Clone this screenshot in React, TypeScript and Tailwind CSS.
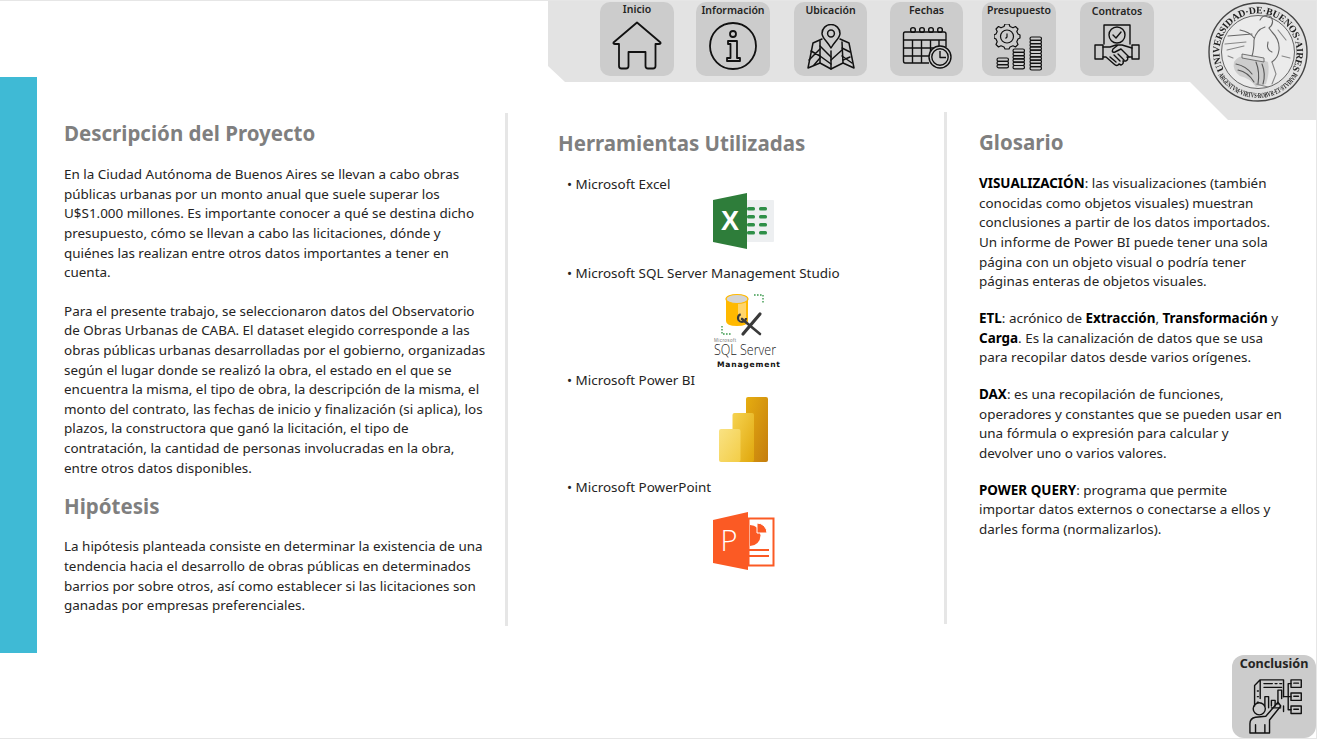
import React from 'react'

const body = "font-['Noto_Sans',sans-serif]"

function HomeIcon() {
  return (
    <svg viewBox="0 0 50 50" className="w-[50px] h-[50px]" fill="none" stroke="#111" strokeWidth="1.8" strokeLinejoin="round" strokeLinecap="round">
      <path d="M25 1.5 L1.5 21.5 Q1 23 3 23 L7 23 L7 45 Q7 47.5 9.5 47.5 L14 47.5 Q16.5 47.5 16.5 45 L16.5 31 L33.5 31 L33.5 45 Q33.5 47.5 36 47.5 L41 47.5 Q43.5 47.5 43.5 45 L43.5 23 L47 23 Q49 23 48.5 21.5 Z" />
    </svg>
  )
}

function InfoIcon() {
  return (
    <svg viewBox="0 0 50 50" className="w-[50px] h-[50px]" fill="none" stroke="#111" strokeWidth="1.8" strokeLinejoin="round">
      <circle cx="25" cy="25" r="23" />
      <circle cx="25" cy="13" r="3" />
      <path d="M20 20 L29 20 L29 37 L32 37 L32 40 L19 40 L19 37 L22.5 37 L22.5 23 L20 23 Z" />
    </svg>
  )
}

function MapIcon() {
  return (
    <svg viewBox="0 0 50 50" className="w-[50px] h-[50px]" fill="none" stroke="#111" strokeWidth="1.5" strokeLinejoin="round" strokeLinecap="round">
      <path d="M25 24 C21 17 16 14 16 9.5 A9 9 0 0 1 34 9.5 C34 14 29 17 25 24 Z" />
      <circle cx="25" cy="9.5" r="3.4" />
      <path d="M16 15 L7 19 L2 44 L14 39 L25 45 L37 39 L48 44 L43 19 L34 15" />
      <path d="M14 17 L14 39 M25 27 L25 45 M36 18 L37 39" />
      <path d="M5 27 L14 32 L25 40 M3 36 L14 25 M14 22 L25 33 M25 36 L36 26 M36 32 L46 39 M36 24 L44 28 M8 41 L14 34 M37 36 L44 33" />
    </svg>
  )
}

function CalendarIcon() {
  return (
    <svg viewBox="0 0 50 50" className="w-[50px] h-[50px]" fill="none" stroke="#111" strokeWidth="1.4" strokeLinejoin="round">
      <path d="M3 8 L42 8 Q44 8 44 10 L44 23 M27 39 L3 39 Q1.5 39 1.5 37 L1.5 10 Q1.5 8 3 8" />
      <path d="M1.5 16 L44 16 M1.5 24 L32 24 M1.5 32 L28 32 M10.5 16 L10.5 39 M19.5 16 L19.5 39 M28.5 16 L28.5 30 M37 16 L37 23" />
      <circle cx="11" cy="6" r="2.4" /><circle cx="20" cy="6" r="2.4" /><circle cx="29" cy="6" r="2.4" /><circle cx="38" cy="6" r="2.4" />
      <circle cx="38" cy="33" r="11" fill="#cccccc" />
      <circle cx="38" cy="33" r="8.2" />
      <path d="M38 27 L38 33.5 L44 33.5" />
    </svg>
  )
}

function BudgetIcon() {
  const coin = (x: number, top: number, n: number) =>
    Array.from({ length: n }, (_, i) => <rect key={i} x={x} y={top + i * 3.3} width="11.5" height="3.3" rx="1.65" />)
  return (
    <svg viewBox="0 0 50 50" className="w-[50px] h-[50px]" fill="none" stroke="#111" strokeWidth="1.2" strokeLinejoin="round">
      <path d="M11 0 L15 0 L16 2.5 L19 3.8 L21.5 2.5 L24 5 L22.8 7.5 L24 10 L26 11 L26 14 L24 15 L22.8 17.8 L24 20.5 L21.5 23 L19 21.8 L16 23 L15 25 L11 25 L10 23 L7 21.8 L4.5 23 L2 20.5 L3.2 17.8 L2 15 L0 14 L0 11 L2 10 L3.2 7.5 L2 5 L4.5 2.5 L7 3.8 L10 2.5 Z" />
      <circle cx="13" cy="12.5" r="6.5" />
      <path d="M13 9.5 L13 13 L11.5 14.5" />
      <g>{coin(3, 34, 3)}</g>
      <g>{coin(19, 25, 6)}</g>
      <g>{coin(36, 13, 10)}</g>
    </svg>
  )
}

function ContractIcon() {
  return (
    <svg viewBox="0 0 50 50" className="w-[50px] h-[50px]" fill="none" stroke="#111" strokeWidth="1.4" strokeLinejoin="round" strokeLinecap="round">
      <path d="M12 20 L12 1 L38 1 L38 20" />
      <circle cx="25" cy="11" r="8" />
      <path d="M21 11 L24 14 L29 8" />
      <path d="M3 21 L11 21 L11 35 L3 35 Z M40 21 L47 21 L47 35 L40 35 Z" />
      <path d="M11 23 L18 23 L24 21 L30 21 L40 24 M40 33 L37 33 L29 25 L23 28 Q19 29 21 25 L26 21" />
      <path d="M11 33 L14 33 L22 40 Q25 43 27 40 L29 41 Q32 40 31 37 L34 37 Q37 35 35 33 L37 33" />
      <path d="M18 33 L24 38 M22 31 L28 37 M26 30 L32 36" />
    </svg>
  )
}

function ReportIcon() {
  return (
    <svg viewBox="0 0 60 60" className="w-[56px] h-[56px]" fill="none" stroke="#111" strokeWidth="1.5" strokeLinejoin="round" strokeLinecap="round">
      <path d="M6 30 L6 8 L12 2 L37 2 L37 20 M12 2 L12 22 M37 36 L37 30 M34 32 L24 32" />
      <path d="M16 6 L25 6 M28 6 L30 6 M33 6 L35 6 M16 10 L35 10" />
      <path d="M9 14 L10 14 M9 20 L10 20 M9 26 L10 26" />
      <path d="M17 30 L17 20 L21 20 L21 32 M24 30 L24 24 L28 24 L28 30 M31 28 L31 13 L35 13 L35 22" />
      <path d="M37 20 L42 20 M42 6 L42 34 M42 6 L45 6 M42 20 L45 20 M42 34 L45 34" />
      <rect x="45" y="2" width="11" height="8" /><rect x="45" y="16" width="11" height="8" /><rect x="45" y="30" width="11" height="8" />
      <path d="M48 5.5 L53 5.5 M48 19.5 L53 19.5 M48 33.5 L53 33.5" />
      <circle cx="11" cy="33" r="6.5" />
      <path d="M1 59 L1 49 Q1 43 7 42 L18 41 L31 26 L34 30 L22 45 L22 59 Z M7 50 L7 59 M17 50 L17 59" />
    </svg>
  )
}

function ExcelLogo() {
  return (
    <svg viewBox="0 0 62 58" className="w-[62px] h-[58px]">
      <rect x="33" y="8" width="28" height="42" rx="1" fill="#edeff1" />
      <path d="M0 8 L34 1 L34 57 L0 50 Z" fill="#2e7d3a" />
      <text x="17" y="38" textAnchor="middle" fontFamily="'Liberation Sans',sans-serif" fontWeight="700" fontSize="27" fill="#fff">X</text>
      <g fill="#2f8f48">
        <rect x="34" y="15" width="8" height="3.5" rx="1.5" /><rect x="46" y="15" width="8" height="3.5" rx="1.5" />
        <rect x="34" y="23" width="8" height="3.5" rx="1.5" /><rect x="46" y="23" width="8" height="3.5" rx="1.5" />
        <rect x="34" y="31" width="8" height="3.5" rx="1.5" /><rect x="46" y="31" width="8" height="3.5" rx="1.5" />
        <rect x="34" y="39" width="8" height="3.5" rx="1.5" /><rect x="46" y="39" width="8" height="3.5" rx="1.5" />
      </g>
    </svg>
  )
}

function SqlLogo() {
  return (
    <svg viewBox="0 0 70 78" className="w-[70px] h-[78px] overflow-visible">
      <path d="M13 7 L13 29 Q13 34 24 34 Q35 34 35 29 L35 7 Z" fill="#ffb900" />
      <rect x="25" y="10" width="8" height="20" fill="#ffd56b" />
      <ellipse cx="24" cy="7" rx="11" ry="4.5" fill="#d4d4d4" stroke="#ffb900" strokeWidth="1.2" />
      <path d="M41 3 L50 3 L50 11" fill="none" stroke="#3c9a4e" strokeWidth="1.4" strokeDasharray="1.6 1.4" />
      <path d="M9 34 L9 42 L19 42" fill="none" stroke="#3c9a4e" strokeWidth="1.4" strokeDasharray="1.6 1.4" />
      <path d="M29 27 L47 42" stroke="#3a3a3a" strokeWidth="2.6" strokeLinecap="round" />
      <path d="M47 22 L30 42" stroke="#3a3a3a" strokeWidth="3.2" strokeLinecap="round" />
      <circle cx="29" cy="26" r="4" fill="none" stroke="#3a3a3a" strokeWidth="2.2" strokeDasharray="17 8" />
      <text x="1" y="49.5" fontFamily="'Liberation Sans',sans-serif" fontSize="4.6" textLength="22" fill="#777">Microsoft</text>
      <text x="1" y="63" fontFamily="'Open Sans',sans-serif" fontWeight="300" fontSize="14.5" textLength="62" lengthAdjust="spacingAndGlyphs" fill="#222">SQL Server</text>
      <text x="4" y="75" fontFamily="'DejaVu Sans',sans-serif" fontWeight="700" fontSize="7.6" textLength="63" fill="#111">Management</text>
    </svg>
  )
}

function PowerBiLogo() {
  return (
    <svg viewBox="0 0 49 65" className="w-[49px] h-[65px]">
      <defs>
        <linearGradient id="pb1" x1="0" y1="0" x2="1" y2="1"><stop offset="0" stopColor="#e6ad10" /><stop offset="1" stopColor="#c47d0e" /></linearGradient>
        <linearGradient id="pb2" x1="0" y1="0" x2="1" y2="1"><stop offset="0" stopColor="#f6d351" /><stop offset="1" stopColor="#e0a70c" /></linearGradient>
        <linearGradient id="pb3" x1="0" y1="0" x2="1" y2="1"><stop offset="0" stopColor="#f9e283" /><stop offset="1" stopColor="#f3cd47" /></linearGradient>
      </defs>
      <rect x="27" y="0" width="22" height="65" rx="2" fill="url(#pb1)" />
      <rect x="13.5" y="16" width="21.5" height="49" rx="2" fill="url(#pb2)" />
      <rect x="0" y="32" width="21.5" height="33" rx="2" fill="url(#pb3)" />
    </svg>
  )
}

function PowerPointLogo() {
  return (
    <svg viewBox="0 0 62 60" className="w-[62px] h-[60px]">
      <rect x="35.5" y="6.5" width="25" height="47" fill="#fff" stroke="#fb5a24" strokeWidth="2" />
      <path d="M37 13 A10.5 10.5 0 1 1 37 34 Z" fill="#fb5a24" />
      <path d="M44 11 A10 10 0 0 1 54 21 L44 21 Z" fill="#fb5a24" stroke="#fff" strokeWidth="1" />
      <path d="M36 38 L56 38 M36 44 L56 44" stroke="#fb5a24" strokeWidth="2" />
      <path d="M0 8 L35 0 L35 58 L0 51 Z" fill="#fb5a24" />
      <text x="16" y="39" textAnchor="middle" fontFamily="'Open Sans',sans-serif" fontWeight="300" fontSize="29" fill="#fff">P</text>
    </svg>
  )
}

function Seal() {
  return (
    <svg viewBox="0 0 104 104" className="w-[104px] h-[104px] blur-[0.3px]">
      <defs>
        <path id="sealTop" d="M 18 70 A 38.5 38.5 0 1 1 86 70" />
        <path id="sealBottom" d="M 12.2 75 A 46 46 0 0 0 91.8 75" />
      </defs>
      <circle cx="52" cy="52" r="49" fill="#e2e2e2" stroke="#444" strokeWidth="1.4" />
      <circle cx="52" cy="52" r="36.5" fill="#ebebeb" stroke="#555" strokeWidth=".9" />
      <text fontFamily="'Liberation Serif',serif" fontWeight="700" fontSize="9.8" fill="#222">
        <textPath href="#sealTop" startOffset="0" textLength="158">UNIVERSIDAD·DE·BUENOS·AIRES</textPath>
      </text>
      <text fontFamily="'Liberation Serif',serif" fontWeight="700" fontSize="7.4" fill="#222">
        <textPath href="#sealBottom" startOffset="0" textLength="96" lengthAdjust="spacingAndGlyphs">ARGENTVM·VIRTVS·ROBVR·ET·STVDIVM</textPath>
      </text>
      {/* figura sentada */}
      <path d="M28 62 Q33 54 46 56 L62 62 Q64 72 60 84 L50 87 Q44 78 34 76 Q26 70 28 62 Z" fill="#cdcdcd" />
      <path d="M36 54 L58 58 L58 62 L36 58 Z" fill="#dedede" stroke="#555" strokeWidth=".8" />
      <g fill="none" stroke="#666" strokeWidth="1.1" strokeLinecap="round">
        <path d="M54 20 Q58 13 65 17 Q69 23 63 28 L66 32 Q74 40 73 50 Q72 58 66 62" />
        <path d="M59 27 Q50 30 48 40 Q48 50 46 56 M62 42 Q60 50 66 52 M48 38 Q44 32 34 30 M46 34 L22 36" />
        <path d="M19 44 L40 42 M21 50 L38 46 M66 62 L70 74 L66 84" stroke="#888" />
        <path d="M30 64 Q40 66 46 74 M32 70 Q42 72 48 82 M50 62 Q54 72 52 84 M56 64 Q60 74 57 84" stroke="#555" />
        <path d="M50 84 L62 87 M72 30 L80 40 M76 56 L84 58 M22 56 L27 58" stroke="#888" />
      </g>
    </svg>
  )
}

const navItems = [
  { label: 'Inicio', icon: <HomeIcon />, box: 'w-[74px]', labelCls: 'h-[19px]', iconCls: 'mt-0' },
  { label: 'Información', icon: <InfoIcon />, box: 'w-[74px] ml-[22px]', labelCls: 'pt-[1px] h-[19px]', iconCls: 'mt-0' },
  { label: 'Ubicación', icon: <MapIcon />, box: 'w-[73px] ml-[24px]', labelCls: 'pt-[1px] h-[19px]', iconCls: 'mt-[3px]' },
  { label: 'Fechas', icon: <CalendarIcon />, box: 'w-[73px] ml-[23px]', labelCls: 'pt-[1px] h-[19px]', iconCls: 'mt-[3px]' },
  { label: 'Presupuesto', icon: <BudgetIcon />, box: 'w-[74px] ml-[19px]', labelCls: 'pt-[1px] h-[19px]', iconCls: 'mt-[3px]' },
  { label: 'Contratos', icon: <ContractIcon />, box: 'w-[74px] ml-[24px]', labelCls: 'pt-[2px] h-[19px]', iconCls: 'mt-[3px]' },
]

export default function App() {
  return (
    <div className={`w-[1320px] h-[740px] bg-white overflow-hidden ${body} text-[#252423]`}>
      <div className="w-[1317px] h-[739px] border-r border-b border-t border-[#e6e6e6] overflow-hidden">
        {/* barra de navegacion */}
        <div className="h-[119px] ml-[548px] bg-[#e3e3e3] [clip-path:polygon(0_0,100%_0,100%_100%,680px_100%,642px_81px,17px_81px,0_65px)] flex items-start pt-[1px] pl-[52px]">
          {navItems.map((item) => (
            <div key={item.label} className={`${item.box} h-[74px] rounded-[10px] bg-[#cccccc] flex flex-col items-center shrink-0`}>
              <div className={`${item.labelCls} text-[10.5px] leading-[14px] font-semibold whitespace-nowrap`}>{item.label}</div>
              <div className={`${item.iconCls}`}>{item.icon}</div>
            </div>
          ))}
          <div className="ml-[52px] -mt-[2px]">
            <Seal />
          </div>
        </div>

        {/* contenido */}
        <div className="-mt-[43px] flex items-start">
          <div className="w-[37px] h-[576px] bg-[#3fbad5] shrink-0" />

          <div className="w-[468px] h-[549px] mt-[36px] shrink-0 pl-[27px] pt-0 text-[13.45px] leading-[19.65px]">
            <h2 className="text-[20.5px] leading-[40px] font-bold text-[#7f7f7f]">Descripción del Proyecto</h2>
            <p className="mt-[12px] whitespace-nowrap">
              En la Ciudad Autónoma de Buenos Aires se llevan a cabo obras<br />
              públicas urbanas por un monto anual que suele superar los<br />
              U$S1.000 millones. Es importante conocer a qué se destina dicho<br />
              presupuesto, cómo se llevan a cabo las licitaciones, dónde y<br />
              quiénes las realizan entre otros datos importantes a tener en<br />
              cuenta.
            </p>
            <p className="mt-[18.6px] whitespace-nowrap">
              Para el presente trabajo, se seleccionaron datos del Observatorio<br />
              de Obras Urbanas de CABA. El dataset elegido corresponde a las<br />
              obras públicas urbanas desarrolladas por el gobierno, organizadas<br />
              según el lugar donde se realizó la obra, el estado en el que se<br />
              encuentra la misma, el tipo de obra, la descripción de la misma, el<br />
              monto del contrato, las fechas de inicio y finalización (si aplica), los<br />
              plazos, la constructora que ganó la licitación, el tipo de<br />
              contratación, la cantidad de personas involucradas en la obra,<br />
              entre otros datos disponibles.
            </p>
            <h2 className="text-[20.5px] leading-[40px] mt-[8px] font-bold text-[#7f7f7f]">Hipótesis</h2>
            <p className="mt-[11px] whitespace-nowrap">
              La hipótesis planteada consiste en determinar la existencia de una<br />
              tendencia hacia el desarrollo de obras públicas en determinados<br />
              barrios por sobre otros, así como establecer si las licitaciones son<br />
              ganadas por empresas preferenciales.
            </p>
          </div>

          <div className="w-[3px] h-[513px] mt-[36px] bg-[#e6e6e6] shrink-0" />

          <div className="w-[436px] mt-[36px] shrink-0 pl-[50px] text-[13.45px] leading-[20px]">
            <h2 className="text-[20.5px] leading-[40px] mt-[10px] font-bold text-[#7f7f7f]">Herramientas Utilizadas</h2>
            <div className="mt-[11px] pl-[9px]">• Microsoft Excel</div>
            <div className="ml-[155px] -mt-[2px]"><ExcelLogo /></div>
            <div className="mt-[13px] pl-[9px]">• Microsoft SQL Server Management Studio</div>
            <div className="ml-[155px] mt-[9px]"><SqlLogo /></div>
            <div className="pl-[9px]">• Microsoft Power BI</div>
            <div className="ml-[161px] mt-[7px]"><PowerBiLogo /></div>
            <div className="mt-[15px] pl-[9px]">• Microsoft PowerPoint</div>
            <div className="ml-[155px] mt-[15px]"><PowerPointLogo /></div>
          </div>

          <div className="w-[3px] h-[512px] mt-[35px] bg-[#e6e6e6] shrink-0" />

          <div className="pl-[32px] mt-[36px] text-[13.45px] leading-[19.65px] whitespace-nowrap">
            <h2 className="text-[20.5px] leading-[40px] mt-[9px] font-bold text-[#7f7f7f]">Glosario</h2>
            <p className="mt-[12px]">
              <b className="font-bold text-black">VISUALIZACIÓN</b>: las visualizaciones (también<br />
              conocidas como objetos visuales) muestran<br />
              conclusiones a partir de los datos importados.<br />
              Un informe de Power BI puede tener una sola<br />
              página con un objeto visual o podría tener<br />
              páginas enteras de objetos visuales.
            </p>
            <p className="mt-[17px]">
              <b className="font-bold text-black">ETL</b>: acrónico de <b className="font-bold text-black">Extracción</b>, <b className="font-bold text-black">Transformación</b> y<br />
              <b className="font-bold text-black">Carga</b>. Es la canalización de datos que se usa<br />
              para recopilar datos desde varios orígenes.
            </p>
            <p className="mt-[17px]">
              <b className="font-bold text-black">DAX</b>: es una recopilación de funciones,<br />
              operadores y constantes que se pueden usar en<br />
              una fórmula o expresión para calcular y<br />
              devolver uno o varios valores.
            </p>
            <p className="mt-[17px]">
              <b className="font-bold text-black">POWER QUERY</b>: programa que permite<br />
              importar datos externos o conectarse a ellos y<br />
              darles forma (normalizarlos).
            </p>
          </div>
        </div>

        {/* boton de conclusion */}
        <div className="flex justify-end">
          <div className="w-[84px] h-[83px] -mt-[7px] rounded-[12px] bg-[#cccccc] flex flex-col items-center">
            <div className="text-[12.6px] leading-[16px] pt-[1px] h-[18px] font-bold whitespace-nowrap">Conclusión</div>
            <div className="mt-[5px] ml-[6px]"><ReportIcon /></div>
          </div>
        </div>
      </div>
    </div>
  )
}
